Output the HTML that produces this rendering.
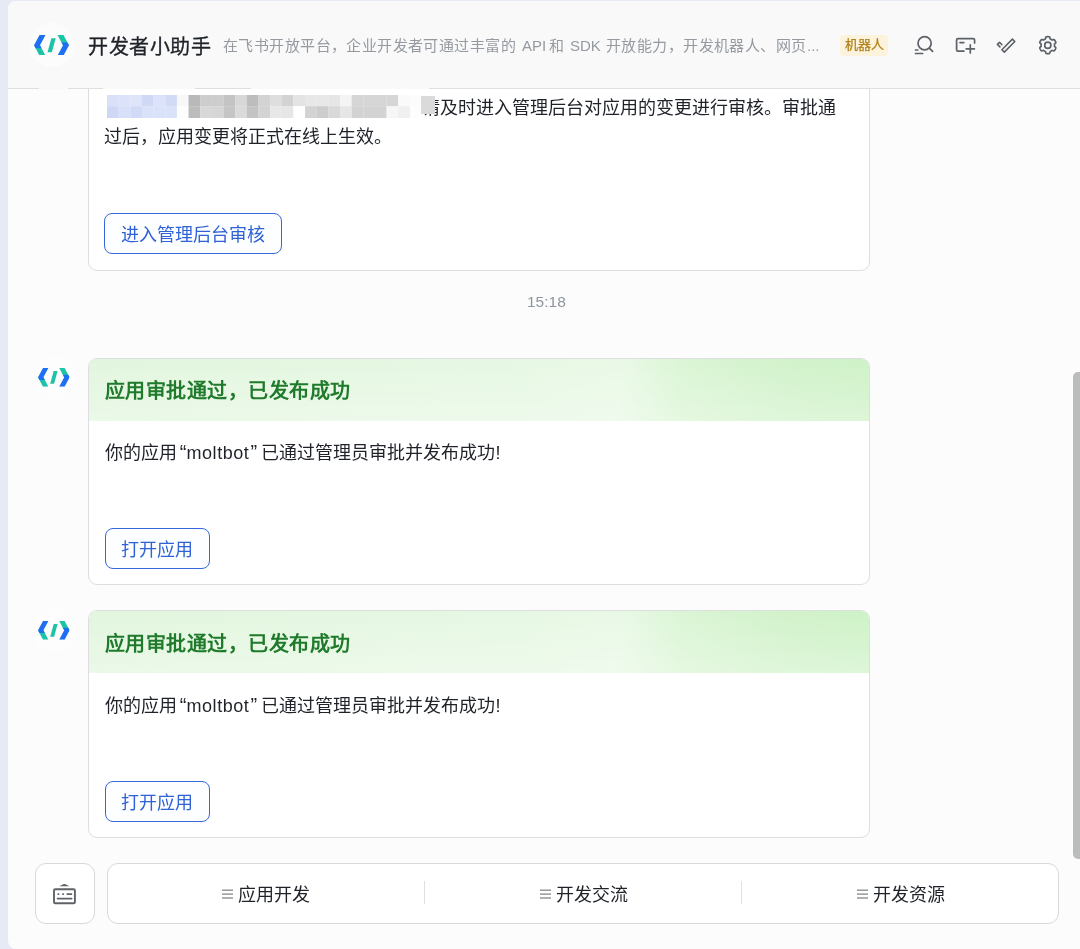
<!DOCTYPE html>
<html lang="zh-CN">
<head>
<meta charset="utf-8">
<style>
*{box-sizing:border-box;margin:0;padding:0}
html,body{width:1080px;height:949px;overflow:hidden;background:#e6eaf5;font-family:"Liberation Sans",sans-serif}
.a{position:absolute;white-space:nowrap}
.gs,.t18,.gt,.bt,.menu,.sub,.subl{will-change:transform}
#panel{position:absolute;left:8px;top:1px;width:1080px;height:948px;background:#fcfcfc;border-radius:8px 0 0 8px}
#hbg{position:absolute;left:8px;top:1px;width:1072px;height:88px;background:#f9f9f9;border-radius:8px 0 0 0;border-bottom:1px solid #dfdfe0}
.card{position:absolute;left:88px;width:781.5px;background:#fff;border:1px solid #dddee0;border-radius:9px;overflow:hidden}
.ghead{position:absolute;left:0;top:0;right:0;height:62.3px;background:linear-gradient(180deg,rgba(255,255,255,0) 0%,rgba(255,255,255,0.3) 100%),linear-gradient(95deg,#e2f6de 0%,#e6f8e3 55%,#e9f9e6 68%,#daf5d4 76%,#d1f2ca 90%,#cef2c7 100%)}
.gt{position:absolute;font-size:20px;line-height:20px;letter-spacing:0.47px;font-weight:700;color:#1f7a2b;white-space:nowrap}
.t18{position:absolute;font-size:18px;line-height:18px;color:#1f2329;white-space:nowrap}
.q{display:inline-block;width:9.5px;text-align:right;font-size:20px}
.q2{display:inline-block;width:12px;text-align:left;padding-left:1px;font-size:20px}
.lat{letter-spacing:0.55px}
.btn{position:absolute;border:1.6px solid #3568dc;border-radius:8px;background:#fdfeff}
.bt{position:absolute;font-size:18px;line-height:18px;color:#2f62d6;white-space:nowrap}
.menu{position:absolute;font-size:18px;line-height:18px;color:#1f2329;white-space:nowrap}
.ham{position:absolute;width:12px;height:12px}
.sub{position:absolute;font-size:15px;line-height:15px;letter-spacing:0.42px;color:#959aa1;white-space:nowrap}
.subl{position:absolute;font-size:15px;line-height:15px;color:#959aa1;white-space:nowrap}
</style>
</head>
<body>
<svg width="0" height="0" style="position:absolute">
  <symbol id="lg" viewBox="0 0 31.6 18.7">
    <polygon points="0,9.35 5.4,9.35 10.4,18.7 5,18.7" fill="#1dc3a6"/>
    <polygon points="5,0 10.4,0 5.4,9.35 6.8,12 1.4,12 0,9.35" fill="#1e6ff1"/>
    <polygon points="21.2,0 26.6,0 31.6,9.35 26.2,9.35" fill="#1dc3a6"/>
    <polygon points="21.2,18.7 26.6,18.7 31.6,9.35 30.2,6.7 24.8,6.7 26.2,9.35" fill="#1e6ff1"/>
    <polygon points="15.7,3.0 19.6,3.0 16.1,15.7 12.2,15.7" fill="#1dc3a6"/>
  </symbol>
</svg>
<div id="panel"></div>

<!-- card 1 -->
<div class="card" style="top:40px;height:231.3px"></div>
<svg class="a" style="left:107px;top:95.3px;filter:blur(0.7px)" width="326" height="23" viewBox="0 0 326 23">
<rect x="0.00" y="0" width="11.75" height="11.3" fill="#d9e0f8"/>
<rect x="11.65" y="0" width="11.75" height="11.3" fill="#dbe2f9"/>
<rect x="23.30" y="0" width="11.75" height="11.3" fill="#dee4fa"/>
<rect x="34.95" y="0" width="11.75" height="11.3" fill="#cfd9f6"/>
<rect x="46.60" y="0" width="11.75" height="11.3" fill="#dbe2f9"/>
<rect x="58.25" y="0" width="11.75" height="11.3" fill="#d1dbf6"/>
<rect x="69.90" y="0" width="11.75" height="11.3" fill="#f8f8f8"/>
<rect x="81.55" y="0" width="11.75" height="11.3" fill="#b9b9b9"/>
<rect x="93.20" y="0" width="11.75" height="11.3" fill="#cdcdcd"/>
<rect x="104.85" y="0" width="11.75" height="11.3" fill="#cdcdcd"/>
<rect x="116.50" y="0" width="11.75" height="11.3" fill="#c4c4c4"/>
<rect x="128.15" y="0" width="11.75" height="11.3" fill="#d8d8d8"/>
<rect x="139.80" y="0" width="11.75" height="11.3" fill="#bdbdbd"/>
<rect x="151.45" y="0" width="11.75" height="11.3" fill="#d3d3d3"/>
<rect x="163.10" y="0" width="11.75" height="11.3" fill="#dedede"/>
<rect x="174.75" y="0" width="11.75" height="11.3" fill="#d3d3d3"/>
<rect x="186.40" y="0" width="11.75" height="11.3" fill="#e4e4e4"/>
<rect x="198.05" y="0" width="11.75" height="11.3" fill="#e8e8e8"/>
<rect x="209.70" y="0" width="11.75" height="11.3" fill="#e8e8e8"/>
<rect x="221.35" y="0" width="11.75" height="11.3" fill="#e6e6e6"/>
<rect x="233.00" y="0" width="11.75" height="11.3" fill="#f4f4f4"/>
<rect x="244.65" y="0" width="11.75" height="11.3" fill="#d6d6d6"/>
<rect x="256.30" y="0" width="11.75" height="11.3" fill="#d6d6d6"/>
<rect x="267.95" y="0" width="11.75" height="11.3" fill="#d6d6d6"/>
<rect x="279.60" y="0" width="11.75" height="11.3" fill="#d6d6d6"/>
<rect x="291.25" y="0" width="11.75" height="11.3" fill="#fafafa"/>
<rect x="302.90" y="0" width="11.75" height="11.3" fill="#fcfcfc"/>
<rect x="0.00" y="11.2" width="11.75" height="11.8" fill="#cfd7f6"/>
<rect x="11.65" y="11.2" width="11.75" height="11.8" fill="#d8e0f9"/>
<rect x="23.30" y="11.2" width="11.75" height="11.8" fill="#d1daf6"/>
<rect x="34.95" y="11.2" width="11.75" height="11.8" fill="#dae2f9"/>
<rect x="46.60" y="11.2" width="11.75" height="11.8" fill="#dae2f9"/>
<rect x="58.25" y="11.2" width="11.75" height="11.8" fill="#dae2f9"/>
<rect x="69.90" y="11.2" width="11.75" height="11.8" fill="#fdfdfd"/>
<rect x="81.55" y="11.2" width="11.75" height="11.8" fill="#bcbcbc"/>
<rect x="93.20" y="11.2" width="11.75" height="11.8" fill="#d8d8d8"/>
<rect x="104.85" y="11.2" width="11.75" height="11.8" fill="#d6d6d6"/>
<rect x="116.50" y="11.2" width="11.75" height="11.8" fill="#c5c5c5"/>
<rect x="128.15" y="11.2" width="11.75" height="11.8" fill="#dadada"/>
<rect x="139.80" y="11.2" width="11.75" height="11.8" fill="#c2c4c4"/>
<rect x="151.45" y="11.2" width="11.75" height="11.8" fill="#d3d3d3"/>
<rect x="163.10" y="11.2" width="11.75" height="11.8" fill="#e8e8e8"/>
<rect x="174.75" y="11.2" width="11.75" height="11.8" fill="#e6e6e6"/>
<rect x="186.40" y="11.2" width="11.75" height="11.8" fill="#ffffff"/>
<rect x="198.05" y="11.2" width="11.75" height="11.8" fill="#d3d3d3"/>
<rect x="209.70" y="11.2" width="11.75" height="11.8" fill="#cdcdcd"/>
<rect x="221.35" y="11.2" width="11.75" height="11.8" fill="#d9d9d9"/>
<rect x="233.00" y="11.2" width="11.75" height="11.8" fill="#e6e6e6"/>
<rect x="244.65" y="11.2" width="11.75" height="11.8" fill="#d3d3d3"/>
<rect x="256.30" y="11.2" width="11.75" height="11.8" fill="#d3d3d3"/>
<rect x="267.95" y="11.2" width="11.75" height="11.8" fill="#d3d3d3"/>
<rect x="279.60" y="11.2" width="11.75" height="11.8" fill="#f6f6f6"/>
<rect x="291.25" y="11.2" width="11.75" height="11.8" fill="#f0f0f0"/>
<rect x="302.90" y="11.2" width="11.75" height="11.8" fill="#fdfdfd"/>
</svg>
<div class="t18" style="left:422.1px;top:98.8px">请及时进入管理后台对应用的变更进行审核。审批通</div>
<svg class="a" style="left:420.5px;top:95.5px;filter:blur(0.7px)" width="14" height="18.5"><rect x="0" y="0" width="14" height="18.5" fill="#dadada"/></svg>
<div class="t18" style="left:104.4px;top:127.8px">过后，应用变更将正式在线上生效。</div>
<div class="btn" style="left:104.4px;top:213.2px;width:177.6px;height:40.4px"></div>
<div class="bt" style="left:120.8px;top:225.6px">进入管理后台审核</div>

<div class="a gs" style="left:527px;top:294px;font-size:15.5px;line-height:15.5px;color:#8f959e">15:18</div>

<!-- card 2 -->
<div class="a" style="left:32px;top:356px;width:44px;height:44px;border-radius:50%;background:#fdfdfd"></div>
<svg class="a" style="left:38.3px;top:368.3px" width="31.6" height="18.7"><use href="#lg"/></svg>
<div class="card" style="top:357.5px;height:227.5px"><div class="ghead"></div></div>
<div class="gt" style="left:104.6px;top:381px">应用审批通过，已发布成功</div>
<div class="t18" style="left:104.5px;top:443px">你的应用<span class="q">“</span><span class="lat">moltbot</span><span class="q2">”</span>已通过管理员审批并发布成功!</div>
<div class="btn" style="left:104.5px;top:528.1px;width:105.3px;height:40.8px"></div>
<div class="bt" style="left:120.8px;top:540.9px">打开应用</div>

<!-- card 3 -->
<div class="a" style="left:32px;top:608.7px;width:44px;height:44px;border-radius:50%;background:#fdfdfd"></div>
<svg class="a" style="left:38.3px;top:621px" width="31.6" height="18.7"><use href="#lg"/></svg>
<div class="card" style="top:610.2px;height:228px"><div class="ghead"></div></div>
<div class="gt" style="left:104.6px;top:633.7px">应用审批通过，已发布成功</div>
<div class="t18" style="left:104.5px;top:696px">你的应用<span class="q">“</span><span class="lat">moltbot</span><span class="q2">”</span>已通过管理员审批并发布成功!</div>
<div class="btn" style="left:104.5px;top:781.1px;width:105.3px;height:40.6px"></div>
<div class="bt" style="left:120.8px;top:793.6px">打开应用</div>

<!-- scrollbar -->
<div class="a" style="left:1073.2px;top:372px;width:14px;height:487px;background:#bbbcbc;border-radius:5px"></div>

<!-- bottom bar -->
<div class="a" style="left:34.5px;top:863px;width:60px;height:61px;background:#fff;border:1.2px solid #d8d9da;border-radius:11px"></div>
<svg class="a" style="left:50px;top:880px" width="30" height="28" viewBox="50 880 30 28">
  <g fill="none" stroke="#5d6168" stroke-linecap="round">
    <rect x="54" y="889.2" width="20.9" height="14" rx="1.3" stroke-width="1.9"/>
    <line x1="58.2" y1="894.1" x2="58.6" y2="894.1" stroke-width="1.8"/>
    <line x1="62.9" y1="894.1" x2="63.3" y2="894.1" stroke-width="1.8"/>
    <line x1="67.3" y1="894.1" x2="71.4" y2="894.1" stroke-width="1.8"/>
    <line x1="57.6" y1="898.6" x2="71.6" y2="898.6" stroke-width="1.8"/>
  </g>
  <path d="M59.4 886.3 L63.2 884.2 Q64.4 883.6 65.6 884.2 L69.4 886.3 Z" fill="#5d6168"/>
</svg>
<div class="a" style="left:106.5px;top:863px;width:952.5px;height:61px;background:#fff;border:1.2px solid #d8d9da;border-radius:11px"></div>
<div class="a" style="left:423.5px;top:880.5px;width:1px;height:23px;background:#dee0e3"></div>
<div class="a" style="left:740.5px;top:880.5px;width:1px;height:23px;background:#dee0e3"></div>
<svg class="ham" style="left:222.1px;top:888px" width="12" height="12" viewBox="0 0 12 12"><g stroke="#8c9092" stroke-width="1.4"><line x1="0" y1="2.2" x2="11" y2="2.2"/><line x1="0" y1="6.1" x2="11" y2="6.1"/><line x1="0" y1="10" x2="11" y2="10"/></g></svg><div class="menu" style="left:237.5px;top:886.3px">应用开发</div>
<svg class="ham" style="left:539.7px;top:888px" width="12" height="12" viewBox="0 0 12 12"><g stroke="#8c9092" stroke-width="1.4"><line x1="0" y1="2.2" x2="11" y2="2.2"/><line x1="0" y1="6.1" x2="11" y2="6.1"/><line x1="0" y1="10" x2="11" y2="10"/></g></svg><div class="menu" style="left:555.6px;top:886.3px">开发交流</div>
<svg class="ham" style="left:857.3px;top:888px" width="12" height="12" viewBox="0 0 12 12"><g stroke="#8c9092" stroke-width="1.4"><line x1="0" y1="2.2" x2="11" y2="2.2"/><line x1="0" y1="6.1" x2="11" y2="6.1"/><line x1="0" y1="10" x2="11" y2="10"/></g></svg><div class="menu" style="left:872.8px;top:886.3px">开发资源</div>

<!-- header -->
<div id="hbg"></div>
<div class="a" style="left:30px;top:23px;width:44px;height:44px;border-radius:50%;background:#fcfcfc"></div>
<div class="a" style="left:39px;top:86px;width:29px;height:3px;background:#f9f9f9"></div>
<div class="a" style="left:103px;top:86px;width:92px;height:3px;background:#f9f9f9"></div>
<div class="a" style="left:251px;top:86px;width:178px;height:3px;background:#f9f9f9"></div>
<svg class="a" style="left:34px;top:34.6px" width="35" height="20.7"><use href="#lg"/></svg>
<div class="a gs" style="left:87.5px;top:36.6px;font-size:20px;line-height:20px;letter-spacing:0.6px;color:#1f2329;-webkit-text-stroke:0.35px #1f2329">开发者小助手</div>
<div class="sub" style="left:223px;top:38px">在飞书开放平台，企业开发者可通过丰富的</div>
<div class="subl" style="left:521.5px;top:38.2px">API</div>
<div class="sub" style="left:549.4px;top:38px">和</div>
<div class="subl" style="left:569.6px;top:38.2px">SDK</div>
<div class="sub" style="left:606px;top:38px">开放能力，开发机器人、网页</div>
<div class="subl" style="left:806.5px;top:38.2px">...</div>
<div class="a" style="left:839.9px;top:35.2px;width:47.9px;height:20.8px;background:#fdf2dc;border-radius:4px"></div>
<div class="a gs" style="left:844.5px;top:38.4px;font-size:13px;line-height:13px;color:#b0831a;-webkit-text-stroke:0.25px #b0831a">机器人</div>
<svg class="a" style="left:900px;top:26px" width="170" height="36" viewBox="900 26 170 36">
  <g fill="none" stroke="#5d6168" stroke-width="1.7" stroke-linecap="round" stroke-linejoin="round">
    <circle cx="924.6" cy="43.3" r="6.6"/>
    <line x1="929.5" y1="48.3" x2="932.6" y2="51.4"/>
    <line x1="915.5" y1="50" x2="917.8" y2="50"/>
    <line x1="915.5" y1="53.5" x2="922.6" y2="53.5"/>
    <path d="M964 51.1 H958 Q956.6 51.1 956.6 49.7 V40 Q956.6 38.6 958 38.6 H973.2 Q974.6 38.6 974.6 40 V43"/>
    <line x1="960" y1="42.6" x2="963.8" y2="42.6"/>
    <line x1="966.2" y1="48.9" x2="974.4" y2="48.9"/>
    <line x1="970.3" y1="44.9" x2="970.3" y2="53"/>
    <path d="M1001.9 49.7 L1012.4 39.1 L1014.8 41.5 L1004.3 52.1 Z" stroke-width="1.6"/>
    <path d="M1001.8 44.6 L999.5 42.3 L997.4 44.4 L999.9 46.9" stroke-width="1.6"/>
    <path d="M1054.50 45.20 L1054.49 44.85 L1054.46 44.50 L1054.42 44.15 L1054.79 43.71 L1055.36 43.17 L1055.88 42.57 L1055.74 42.15 L1055.57 41.74 L1055.37 41.34 L1055.16 40.95 L1054.93 40.57 L1054.68 40.20 L1054.41 39.85 L1054.12 39.51 L1053.33 39.67 L1052.58 39.89 L1052.02 39.99 L1051.74 39.78 L1051.45 39.58 L1051.15 39.40 L1050.84 39.23 L1050.53 39.08 L1050.20 38.95 L1050.01 38.40 L1049.83 37.64 L1049.57 36.89 L1049.13 36.80 L1048.69 36.75 L1048.24 36.71 L1047.80 36.70 L1047.36 36.71 L1046.91 36.75 L1046.47 36.80 L1046.03 36.89 L1045.77 37.64 L1045.59 38.40 L1045.40 38.95 L1045.07 39.08 L1044.76 39.23 L1044.45 39.40 L1044.15 39.58 L1043.86 39.78 L1043.58 39.99 L1043.02 39.89 L1042.27 39.67 L1041.48 39.51 L1041.19 39.85 L1040.92 40.20 L1040.67 40.57 L1040.44 40.95 L1040.23 41.34 L1040.03 41.74 L1039.86 42.15 L1039.72 42.57 L1040.24 43.17 L1040.81 43.71 L1041.18 44.15 L1041.14 44.50 L1041.11 44.85 L1041.10 45.20 L1041.11 45.55 L1041.14 45.90 L1041.18 46.25 L1040.81 46.69 L1040.24 47.23 L1039.72 47.83 L1039.86 48.25 L1040.03 48.66 L1040.23 49.06 L1040.44 49.45 L1040.67 49.83 L1040.92 50.20 L1041.19 50.55 L1041.48 50.89 L1042.27 50.73 L1043.02 50.51 L1043.58 50.41 L1043.86 50.62 L1044.15 50.82 L1044.45 51.00 L1044.76 51.17 L1045.07 51.32 L1045.40 51.45 L1045.59 52.00 L1045.77 52.76 L1046.03 53.51 L1046.47 53.60 L1046.91 53.65 L1047.36 53.69 L1047.80 53.70 L1048.24 53.69 L1048.69 53.65 L1049.13 53.60 L1049.57 53.51 L1049.83 52.76 L1050.01 52.00 L1050.20 51.45 L1050.53 51.32 L1050.84 51.17 L1051.15 51.00 L1051.45 50.82 L1051.74 50.62 L1052.02 50.41 L1052.58 50.51 L1053.33 50.73 L1054.12 50.89 L1054.41 50.55 L1054.68 50.20 L1054.93 49.83 L1055.16 49.45 L1055.37 49.06 L1055.57 48.66 L1055.74 48.25 L1055.88 47.83 L1055.36 47.23 L1054.79 46.69 L1054.42 46.25 L1054.46 45.90 L1054.49 45.55Z" stroke-width="1.7"/>
    <circle cx="1047.8" cy="45.2" r="3.1"/>
  </g>
</svg>
</body>
</html>
